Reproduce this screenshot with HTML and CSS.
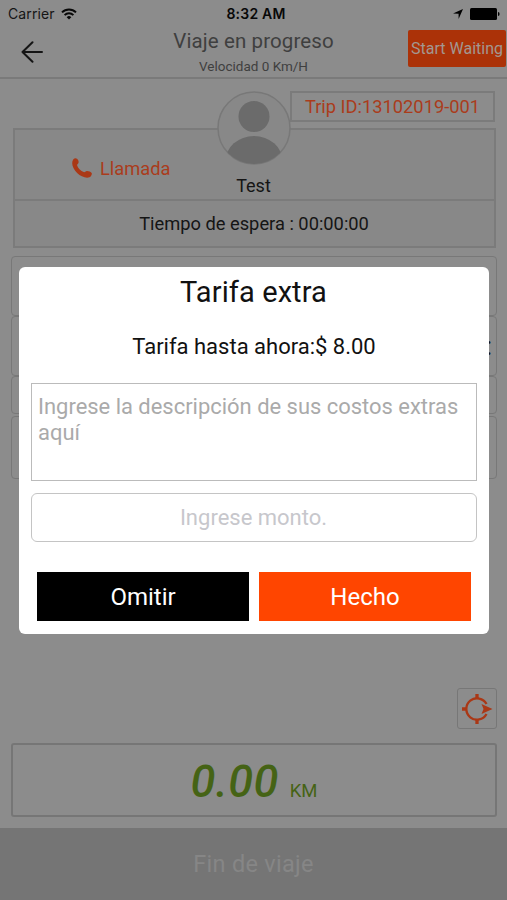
FILE: index.html
```html
<!DOCTYPE html>
<html lang="es">
<head>
<meta charset="utf-8">
<title>Viaje en progreso</title>
<link rel="stylesheet" href="styles.css">
</head>
<body>
<div class="screen">
  <div class="status">
    <div class="carrier"><span>Carrier</span>
      <svg width="16" height="12" viewBox="0 0 16 12" fill="none" stroke="#080808" stroke-width="2"><path d="M1 4.4a10 10 0 0 1 14 0M3.6 7.1a6.3 6.3 0 0 1 8.8 0"/><path d="M8 11.4 5.7 9.2a3.3 3.3 0 0 1 4.6 0z" fill="#080808" stroke="none"/></svg>
    </div>
    <b class="clock">8:32 AM</b>
    <div class="indicators">
      <svg width="10" height="10" viewBox="0 0 10 10"><path d="M10 0 5.6 10V4.8L0 4.4z"/></svg>
      <svg width="30" height="12" viewBox="0 0 30 12"><rect width="27" height="12" rx="1.5"/><path d="M28 4q1.6 0 1.6 2T28 8z"/></svg>
    </div>
  </div>
  <header class="header">
    <svg class="back" width="22" height="22" viewBox="0 0 22 22" fill="none" stroke="#151515" stroke-width="2" stroke-linecap="round" stroke-linejoin="round"><path d="M21 11H1.5M11.5 1.2 1.5 11l10 9.8"/></svg>
    <div class="heading"><h1>Viaje en progreso</h1><p>Velocidad 0 Km/H</p></div>
    <div class="waiting"><span>Start Waiting</span></div>
  </header>
  <main class="content">
    <div class="trip-id"><span>Trip ID:13102019-001</span></div>
    <section class="rider">
      <svg class="avatar" width="74" height="74" viewBox="0 0 74 74"><defs><clipPath id="face"><circle cx="37" cy="37" r="36"/></clipPath></defs><circle cx="37" cy="37" r="36" fill="#888" stroke="#787878" stroke-width="1.500"/><g fill="#6b6b6b" clip-path="url(#face)"><circle cx="37" cy="25.500" r="15.500"/><ellipse cx="37" cy="70" rx="28.500" ry="25"/></g></svg>
      <div class="rider-info">
        <div class="call"><svg width="20" height="20" viewBox="0 0 20 20" fill="#aa3816"><path d="M1.200 1.500Q3-.5 5 .8c1.500 1 2 3.200 1.300 4.400L5 7c.8 3 3.400 5.700 7.200 7.300l2-1.100c1.300-.5 4.600.3 5.500 1.800.5 1.200-.6 3.700-2.200 4.300C9.500 22-3.500 9.500 1.200 1.500z"/></svg><span>Llamada</span></div>
        <span class="name">Test</span>
      </div>
      <div class="wait-time"><span>Tiempo de espera : 00:00:00</span></div>
    </section>
    <div class="rows">
      <div class="row"></div>
      <div class="row fare"><span>:</span></div>
      <div class="row short"></div>
      <div class="row last"></div>
    </div>
    <div class="locate"><svg width="32" height="32" viewBox="0 0 32 32" fill="none" stroke="#aa3816" stroke-width="2.300"><path d="M25.500 11a10.700 10.700 0 1 0 0 10"/><path d="M16 1v5M16 26v5M1 16h5" stroke-width="3.300"/><path d="m20.500 11 11 5-11 5 2-5z" fill="#aa3816" stroke="none"/></svg></div>
    <div class="distance"><span class="number">0.00</span><span class="unit">KM</span></div>
  </main>
  <footer class="finish"><span>Fin de viaje</span></footer>
  <div class="dialog">
    <h2>Tarifa extra</h2>
    <p class="total"><span>Tarifa hasta ahora:$ 8.00</span></p>
    <div class="description">Ingrese la descripción de sus costos extras aquí</div>
    <div class="amount"><span>Ingrese monto.</span></div>
    <div class="actions"><div class="btn skip"><span>Omitir</span></div><div class="btn done"><span>Hecho</span></div></div>
  </div>
</div>
</body>
</html>
```
FILE: styles.css
```css
* { box-sizing: border-box; }
body { margin: 0; font-family: Roboto, "Liberation Sans", sans-serif; }
h1, h2, p { margin: 0; font-weight: 400; }
svg { display: block; flex: none; }
.screen { position: relative; width: 507px; height: 900px; background: #8c8c8c; color: #151515; display: flex; flex-direction: column; overflow: hidden; }
.status { height: 27px; flex: none; display: grid; grid-template-columns: 1fr 1fr 1fr; align-items: center; padding: 0 7px 0 8px; font-family: Inter, sans-serif; font-size: 13.3px; }
.carrier { display: flex; align-items: center; gap: 6px; font-size: 14px; letter-spacing: .1px; }
.clock { text-align: center; color: #080808; font-weight: 600; font-size: 14px; letter-spacing: .2px; padding-left: 4px; }
.indicators { display: flex; justify-content: flex-end; align-items: center; gap: 7px; }
.header { height: 52px; flex: none; border-bottom: 2px solid #7a7a7a; display: grid; grid-template-columns: 100px 1fr 100px; padding-right: 1px; }
.back { margin: 14px 0 0 21px; }
.heading { text-align: center; color: #3f3f3f; padding-left: 1px; }
.heading h1 { font-size: 20.500px; line-height: 28px; letter-spacing: .1px; }
.heading p { font-size: 13.500px; line-height: 22px; }
.waiting { height: 37px; margin: 3px 0 0 2px; border-radius: 2px; background: #ab3208; color: #a39790; font-size: 16px; display: flex; align-items: center; justify-content: center; white-space: nowrap; }
.content { flex: 1; padding: 12px 10px 0 11px; display: flex; flex-direction: column; }
.trip-id { align-self: flex-end; width: 205px; height: 31px; margin-right: 2px; border: 2px solid #7b7b7b; color: #aa3c1c; font-size: 18.300px; display: flex; align-items: center; justify-content: center; white-space: nowrap; }
.rider { position: relative; height: 120px; margin: 6px 1px 0 2px; border: 2px solid #7b7b7b; background: #888; }
.avatar { position: absolute; left: 202px; top: -39px; }
.rider-info { height: 71px; border-bottom: 2px solid #7b7b7b; display: grid; grid-template-columns: 202px 74px 1fr; }
.call { display: flex; align-items: center; gap: 8px; padding: 7px 0 0 57px; color: #aa3c1c; font-size: 18.300px; }
.name { align-self: end; text-align: center; font-size: 18px; line-height: 26px; padding-right: 1px; }
.wait-time { height: 45px; display: flex; align-items: center; justify-content: center; font-size: 18.300px; padding-right: 1px; }
.rows { margin-top: 8px; }
.row { height: 60px; border: 1.500px solid #787878; border-radius: 4px; }
.fare { display: flex; justify-content: flex-end; align-items: center; padding-right: 4px; font-size: 26px; color: #111; }
.short { height: 38px; }
.last { height: 63px; margin-top: 2px; }
.locate { align-self: flex-end; width: 40px; height: 41px; margin-top: 209px; border: 1px solid #777; border-radius: 3px; display: flex; align-items: center; justify-content: center; }
.distance { height: 74px; margin-top: 14px; border: 2px solid #767676; border-radius: 3px; color: #456315; display: flex; align-items: baseline; justify-content: center; gap: 11px; line-height: 74px; }
.number { font-size: 45px; font-style: italic; font-weight: 500; letter-spacing: .4px; }
.unit { font-size: 18.500px; }
.finish { height: 72px; flex: none; background: #757575; color: #868686; font-size: 23.500px; display: flex; align-items: center; justify-content: center; letter-spacing: .3px; }
.dialog { position: absolute; left: 19px; top: 267px; width: 470px; height: 367px; border-radius: 6px; background: #fff; color: #111; padding: 0 12px; }
.dialog h2 { text-align: center; font-size: 29px; line-height: 50px; letter-spacing: .1px; padding-right: 1px; }
.total { height: 66px; text-align: center; font-size: 22px; line-height: 59px; }
.description { height: 98px; border: 1px solid #bbb; padding: 10px 6px; font-size: 21.950px; line-height: 26px; color: #aaa; }
.amount { height: 49px; margin: 12px 0 0; border: 1px solid #c4c4c4; border-radius: 6px; color: #c7c7cc; font-size: 22px; display: flex; align-items: center; justify-content: center; padding-right: 1px; }
.actions { display: flex; gap: 10px; padding: 0 6px; margin-top: 30px; }
.btn { flex: 1; height: 49px; display: flex; align-items: center; justify-content: center; font-size: 24px; color: #fff; }
.skip { background: #000; }
.done { background: #ff4500; }
```
